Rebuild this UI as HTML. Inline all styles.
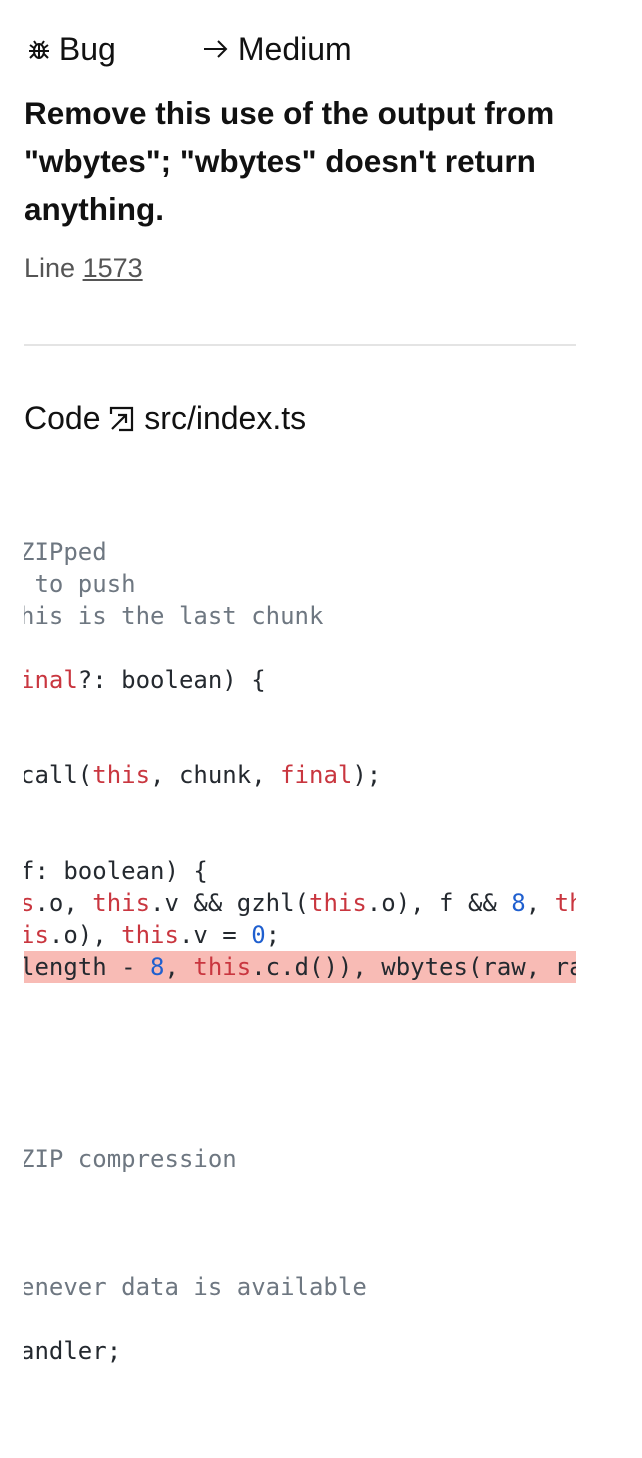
<!DOCTYPE html>
<html><head><meta charset="utf-8"><style>
body{margin:0;background:#fff;width:642px;height:1458px;position:relative;overflow:hidden;font-family:"Liberation Sans",sans-serif;color:#111}
.a{position:absolute;white-space:pre}
.code{position:absolute;left:24px;top:0;width:552px;height:1458px;overflow:hidden}
.l{position:absolute;left:-4px;font-family:"DejaVu Sans Mono",monospace;font-size:24px;line-height:32px;height:32px;color:#24292f;white-space:pre}
.c{color:#6e7781}.r{color:#c9363f}.b{color:#1f5fcf}
</style></head><body>
<div class="a" style="left:28px;top:30px;font-size:32px;line-height:38px"><svg width="22" height="22" viewBox="0 0 22 22" style="vertical-align:-1px" fill="none" stroke="#111" stroke-width="2"><ellipse cx="11" cy="12" rx="5" ry="7"/><path d="M6 12h10M11 6v13M6 9L2 6M16 9l4-3M6 12H1M16 12h5M6 15l-4 4M16 15l4 4M8 5L6 2M14 5l2-3"/></svg> Bug</div>
<div class="a" style="left:203px;top:30px;font-size:32px;line-height:38px"><svg width="26" height="20" viewBox="0 0 26 20" fill="none" stroke="#111" stroke-width="2" style="vertical-align:1px"><path d="M1 10h22M15 2l8 8-8 8"/></svg> Medium</div>
<div class="a" style="left:24px;top:89px;font-size:31.5px;line-height:48px;font-weight:bold;white-space:normal;width:580px">Remove this use of the output from "wbytes"; "wbytes" doesn't return anything.</div>
<div class="a" style="left:24px;top:252px;font-size:27px;line-height:32px;color:#555">Line <span style="text-decoration:underline">1573</span></div>
<div class="a" style="left:24px;top:344px;width:552px;height:2px;background:#e4e4e4"></div>
<div class="a" style="left:24px;top:399px;font-size:32px;line-height:38px">Code <svg width="26" height="26" viewBox="0 0 26 26" style="vertical-align:-3px" fill="none" stroke="#111" stroke-width="2.2"><path d="M2 8V2h21v22H10"/><path d="M3 23L17 9M9 9h8v8"/></svg> src/index.ts</div>
<div class="code">
<div class="l c" style="top:536px">ZIPped</div>
<div class="l c" style="top:568px"> to push</div>
<div class="l c" style="top:600px">his is the last chunk</div>
<div class="l" style="top:664px"><span class="r">inal</span>?: boolean) {</div>
<div class="l" style="top:759px">call(<span class="r">this</span>, chunk, <span class="r">final</span>);</div>
<div class="l" style="top:855px">f: boolean) {</div>
<div class="l" style="top:887px"><span class="r">s</span>.o, <span class="r">this</span>.v &amp;&amp; gzhl(<span class="r">this</span>.o), f &amp;&amp; <span class="b">8</span>, <span class="r">this</span></div>
<div class="l" style="top:919px"><span class="r">is</span>.o), <span class="r">this</span>.v = <span class="b">0</span>;</div>
<div class="l" style="top:951px;left:0;width:552px;background:#f8bbb5"><span style="margin-left:-4px">length - <span class="b">8</span>, <span class="r">this</span>.c.d()), wbytes(raw, raw</span></div>
<div class="l c" style="top:1143px">ZIP compression</div>
<div class="l c" style="top:1271px">enever data is available</div>
<div class="l" style="top:1335px">andler;</div>
</div>
</body></html>
